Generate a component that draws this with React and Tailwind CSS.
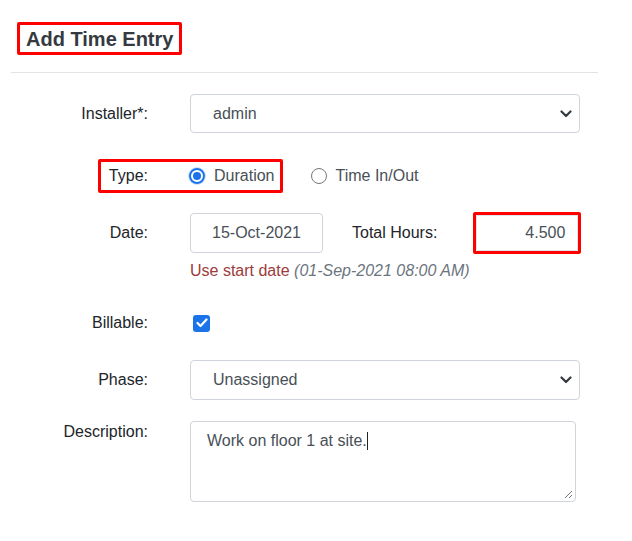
import React from "react";

function Chevron() {
  return (
    <svg width="12" height="8" viewBox="0 0 12 8" className="absolute right-[7px] top-1/2 -translate-y-1/2">
      <path d="M1.5 1.5 L6 6 L10.5 1.5" fill="none" stroke="#343a40" strokeWidth="2.2" strokeLinecap="round" strokeLinejoin="round" />
    </svg>
  );
}

function Label({ children, className = "" }) {
  return (
    <div className={"w-[149px] shrink-0 text-right pr-[1px] text-[#212529] " + className}>{children}</div>
  );
}

export default function App() {
  return (
    <div className="w-[632px] h-[541px] bg-white text-[16px] leading-[20px]" style={{ fontFamily: '"Liberation Sans", Arial, sans-serif' }}>
      <div className="pt-[22px] pl-[17px]">
        <div className="inline-flex items-center h-[33px] border-[3px] border-[#ff0000] rounded-[2px] pl-[6px] pr-[6px]">
          <span className="text-[20px] font-bold text-[#343a40] leading-[24px]">Add Time Entry</span>
        </div>
      </div>
      <div className="ml-[11px] mt-[17px] w-[587px] h-px bg-[#e3e3e3]" />

      <div className="flex flex-col">
        {/* Installer */}
        <div className="flex items-center mt-[21px]">
          <Label>Installer*:</Label>
          <div className="ml-[41px] relative w-[390px] h-[39px] border border-[#ced4da] rounded-[4px] flex items-center pl-[22px] text-[#495057]">
            admin
            <Chevron />
          </div>
        </div>

        {/* Type */}
        <div className="relative flex items-center mt-[28px] h-[30px]">
          <Label>Type:</Label>
          <div className="ml-[40px] flex items-center">
            <span className="w-[16px] h-[16px] rounded-full border-[2px] border-[#1a73e8] flex items-center justify-center shadow-[0_0_0_1px_#cfe0fb]">
              <span className="w-[8px] h-[8px] rounded-full bg-[#1a73e8]" />
            </span>
            <span className="ml-[9px] text-[#495057]">Duration</span>
            <span className="ml-[37px] w-[16px] h-[16px] rounded-full border border-[#767676]" />
            <span className="ml-[8px] text-[#495057]">Time In/Out</span>
          </div>
          <div className="absolute left-[98px] top-[-2px] w-[185px] h-[34px] border-[3px] border-[#ff0000] rounded-[2px]" />
        </div>

        {/* Date */}
        <div className="flex items-center mt-[21px] h-[41px]">
          <Label>Date:</Label>
          <div className="ml-[41px] w-[133px] h-[40px] border border-[#ced4da] rounded-[4px] flex items-center justify-center text-[#495057]">
            15-Oct-2021
          </div>
          <div className="ml-[29px] text-[#212529]">Total Hours:</div>
          <div className="ml-[36px] w-[108px] h-[42px] border-[3px] border-[#ff0000] rounded-[2px]">
            <div className="w-full h-full border border-[#dfe6ee] flex items-center justify-end pr-[12px] text-[#495057]">4.500</div>
          </div>
        </div>

        {/* Hint */}
        <div className="flex mt-[8px]">
          <div className="w-[190px] shrink-0" />
          <div className="text-[#9b3b3b]">
            Use start date <span className="italic text-[#6c757d]">(01-Sep-2021 08:00 AM)</span>
          </div>
        </div>

        {/* Billable */}
        <div className="flex items-center mt-[33px] h-[18px]">
          <Label>Billable:</Label>
          <div className="ml-[44px] w-[17px] h-[17px] rounded-[3px] bg-[#1a73e8] flex items-center justify-center">
            <svg width="12" height="10" viewBox="0 0 12 10">
              <path d="M1.5 5 L4.5 8 L10.5 1.5" fill="none" stroke="white" strokeWidth="2.2" strokeLinecap="round" strokeLinejoin="round" />
            </svg>
          </div>
        </div>

        {/* Phase */}
        <div className="flex items-center mt-[28px]">
          <Label>Phase:</Label>
          <div className="ml-[41px] relative w-[390px] h-[40px] border border-[#ced4da] rounded-[4px] flex items-center pl-[22px] text-[#495057]">
            Unassigned
            <Chevron />
          </div>
        </div>

        {/* Description */}
        <div className="flex items-start mt-[21px]">
          <Label className="pt-[1px]">Description:</Label>
          <div className="ml-[41px] relative w-[386px] h-[81px] border border-[#ced4da] rounded-[4px] pl-[16px] pt-[9px] text-[#495057]">
            <span>Work on floor 1 at site.</span>
            <span className="inline-block w-px h-[18px] bg-[#222] align-[-4px]" />
            <svg width="10" height="10" viewBox="0 0 10 10" className="absolute right-[2px] bottom-[2px]">
              <path d="M9 2 L2 9 M9 6 L6 9" stroke="#777" strokeWidth="1" />
            </svg>
          </div>
        </div>
      </div>
    </div>
  );
}
